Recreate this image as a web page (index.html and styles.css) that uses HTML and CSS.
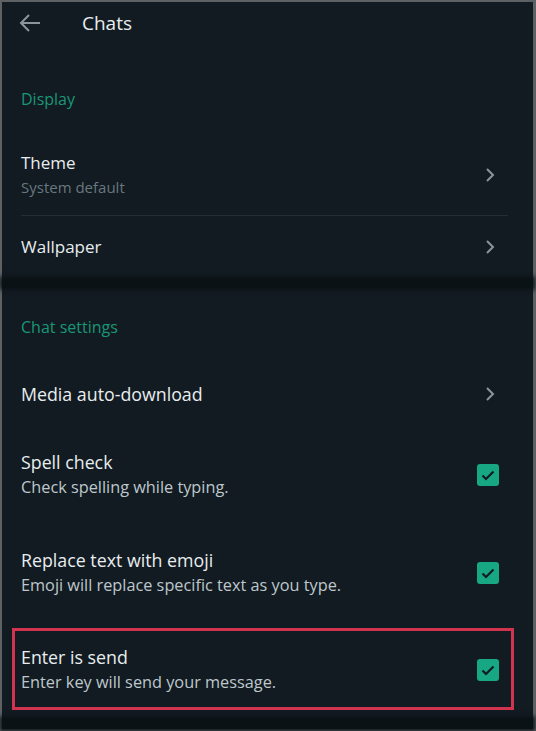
FILE: index.html
```html
<!DOCTYPE html>
<html>
<head>
<meta charset="utf-8">
<link rel="stylesheet" href="styles.css">
</head>
<body>
<div class="frame">
  <header class="header">
    <svg class="back" width="22" height="18" viewBox="0 0 22 18"><path d="M21 9H2M10 1L2 9l8 8" fill="none" stroke="#8a969c" stroke-width="2"/></svg>
    <span class="title">Chats</span>
  </header>
  <section class="section first">
    <div class="label label-display">Display</div>
    <div class="row row-theme">
      <div class="text">
        <div class="name">Theme</div>
        <div class="sub dim">System default</div>
      </div>
      <svg class="chev" width="10" height="16" viewBox="0 0 10 16"><path d="M2 2l6 6-6 6" fill="none" stroke="#8a969c" stroke-width="2"/></svg>
    </div>
    <div class="divider"></div>
    <div class="row row-wall">
      <div class="name">Wallpaper</div>
      <svg class="chev" width="10" height="16" viewBox="0 0 10 16"><path d="M2 2l6 6-6 6" fill="none" stroke="#8a969c" stroke-width="2"/></svg>
    </div>
  </section>
  <div class="band"></div>
  <section class="section second">
    <div class="label label-chat">Chat settings</div>
    <div class="row row-media">
      <div class="name big">Media auto-download</div>
      <svg class="chev" width="10" height="16" viewBox="0 0 10 16"><path d="M2 2l6 6-6 6" fill="none" stroke="#8a969c" stroke-width="2"/></svg>
    </div>
    <div class="row row-check row-spell">
      <div class="text">
        <div class="name big">Spell check</div>
        <div class="sub">Check spelling while typing.</div>
      </div>
      <span class="box"><svg width="22" height="22" viewBox="0 0 22 22"><path d="M5.5 11.5l3.5 3.5 7.5-7.5" fill="none" stroke="#111b21" stroke-width="2.2"/></svg></span>
    </div>
    <div class="row row-check row-replace">
      <div class="text">
        <div class="name big">Replace text with emoji</div>
        <div class="sub">Emoji will replace specific text as you type.</div>
      </div>
      <span class="box"><svg width="22" height="22" viewBox="0 0 22 22"><path d="M5.5 11.5l3.5 3.5 7.5-7.5" fill="none" stroke="#111b21" stroke-width="2.2"/></svg></span>
    </div>
    <div class="row row-check row-enter">
      <div class="text">
        <div class="name big">Enter is send</div>
        <div class="sub">Enter key will send your message.</div>
      </div>
      <span class="box"><svg width="22" height="22" viewBox="0 0 22 22"><path d="M5.5 11.5l3.5 3.5 7.5-7.5" fill="none" stroke="#111b21" stroke-width="2.2"/></svg></span>
    </div>
  </section>
  <div class="band bottom"></div>
</div>
</body>
</html>
```
FILE: styles.css
```css
html, body {
  margin: 0;
  padding: 0;
}
body {
  background: #5d6164;
  width: 536px;
  height: 731px;
  overflow: hidden;
  font-family: "Open Sans", "Noto Sans", sans-serif;
}
.frame {
  margin: 2px 3px 2px 2px;
  height: 727px;
  background: #111b21;
  display: flex;
  flex-direction: column;
  color: #e9edef;
}
.header {
  height: 42px;
  display: flex;
  align-items: center;
  padding-left: 17px;
}
.back {
  display: block;
}
.title {
  margin-left: 41px;
  font-size: 19px;
  color: #e9edef;
}
.label {
  font-size: 16px;
  line-height: 22px;
  color: #1b9676;
  padding-left: 19px;
}
.label-display {
  margin-top: 44px;
  margin-bottom: 22px;
}
.label-chat {
  margin-top: 28px;
  margin-bottom: 44px;
}
.row {
  display: flex;
  align-items: center;
  justify-content: space-between;
  padding-left: 19px;
  padding-right: 38px;
}
.name {
  font-size: 17px;
  line-height: 24px;
  color: #e9edef;
}
.name.big {
  font-size: 17.8px;
}
.sub {
  font-size: 16.3px;
  line-height: 26px;
  color: #bfc7cc;
}
.sub.dim {
  font-size: 15px;
  line-height: 24px;
  color: #69777f;
}
.chev {
  display: block;
}
.row-theme {
  padding-top: 19px;
  padding-bottom: 16px;
}
.divider {
  height: 1px;
  background: #222d34;
  margin-left: 19px;
  margin-right: 25px;
}
.row-wall {
  height: 62px;
}
.band {
  height: 10px;
  background: #0b1216;
  box-shadow: 0 0 4px 2px #0d1519;
}
.row-media {
  height: 24px;
  margin-bottom: 44px;
}
.row-check {
  padding-right: 34px;
}
.row-spell {
  margin-bottom: 48px;
}
.row-replace {
  margin-bottom: 30px;
}
.row-enter {
  margin-left: 10px;
  margin-right: 19px;
  border: 3px solid #d2334f;
  padding: 14px 12px 12px 6px;
}
.box {
  width: 22px;
  height: 22px;
  border-radius: 3px;
  background: #17a883;
  display: block;
}
.box svg {
  display: block;
}
.band.bottom {
  margin-top: 8px;
  flex: 1 1 auto;
}
```
